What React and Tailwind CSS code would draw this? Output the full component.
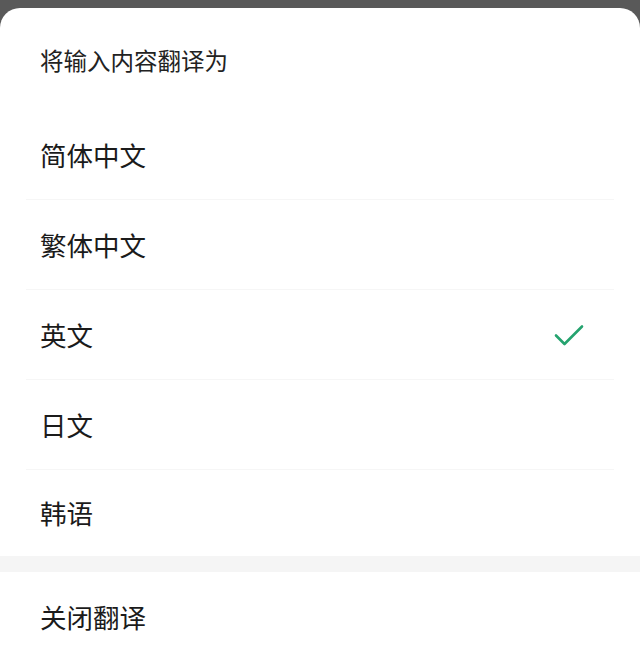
import React, { useState } from "react";

const languages = ["简体中文", "繁体中文", "英文", "日文", "韩语"];

function Check() {
  return (
    <svg width="32" height="24" viewBox="0 0 32 24" fill="none">
      <path
        d="M3 12.5 L11.5 21 L29 3.5"
        stroke="#25a36f"
        strokeWidth="2.6"
        strokeLinecap="round"
        strokeLinejoin="round"
      />
    </svg>
  );
}

export default function App() {
  const [selected, setSelected] = useState("英文");

  return (
    <div
      className="w-[640px] h-[661px] bg-[#595959] pt-[8px] overflow-hidden"
      style={{ fontFamily: '"Noto Sans CJK SC", "Noto Sans", sans-serif' }}
    >
      <div className="bg-white rounded-t-[20px] h-full flex flex-col">
        {/* Title */}
        <div className="h-[102px] pt-[37px] px-[40px]">
          <p className="text-[23.5px] leading-[30px] text-[#222]">将输入内容翻译为</p>
        </div>

        {/* Language list */}
        {languages.map((lang, i) => (
          <div key={lang}>
            <button
              type="button"
              onClick={() => setSelected(lang)}
              className={
                "w-full flex items-center justify-between pl-[40px] pr-[55px] text-left " +
                (i === languages.length - 1 ? "h-[86px]" : "h-[89px]")
              }
            >
              <span className="text-[26.5px] leading-[34px] text-[#1b1b1b]">{lang}</span>
              {selected === lang && <Check />}
            </button>
            {i < languages.length - 1 && (
              <div className="mx-[26px] h-px bg-[#f6f6f6]" />
            )}
          </div>
        ))}

        {/* Gap */}
        <div className="h-[16px] bg-[#f5f5f5]" />

        {/* Close */}
        <button type="button" className="h-[89px] flex items-center px-[40px] text-left">
          <span className="text-[26.5px] leading-[34px] text-[#1b1b1b]">关闭翻译</span>
        </button>
      </div>
    </div>
  );
}
